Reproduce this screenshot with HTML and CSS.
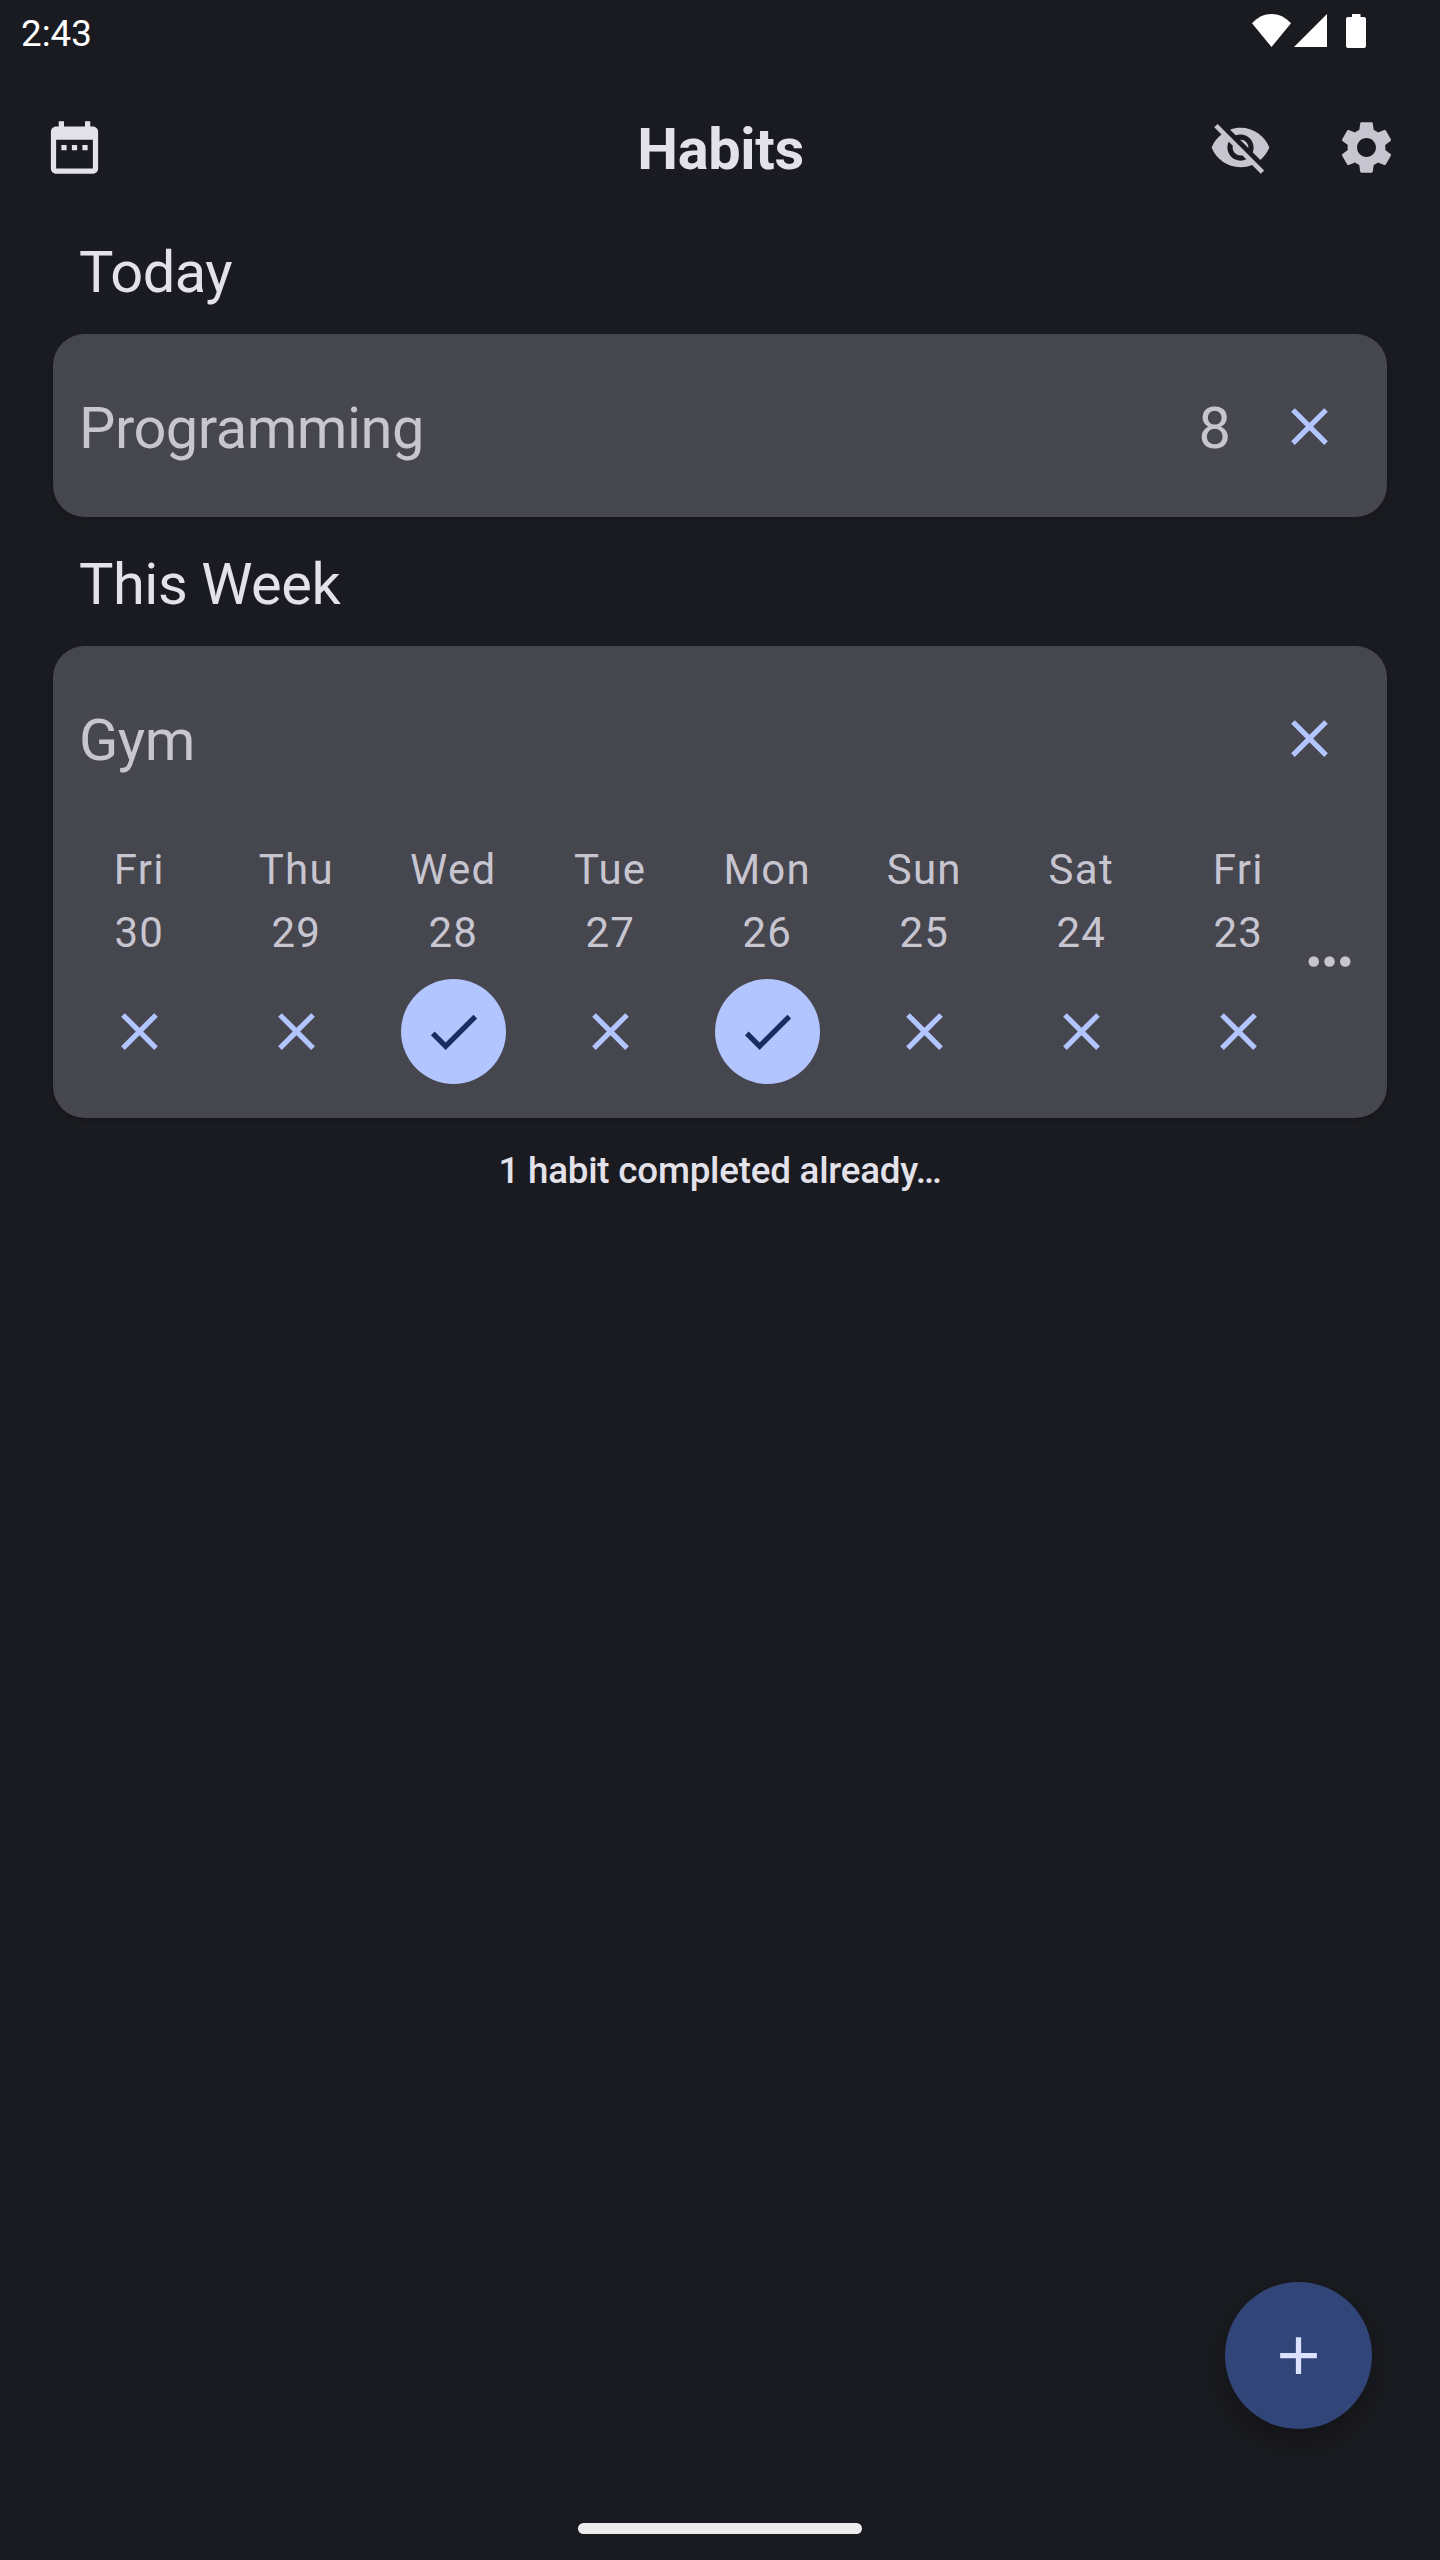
FILE: index.html
```html
<!DOCTYPE html>
<html lang="en">
<head>
<meta charset="utf-8">
<title>Habits</title>
<link rel="stylesheet" href="styles.css">
</head>
<body>
<svg class="sprite" aria-hidden="true">
  <symbol id="close" viewBox="0 0 24 24"><path d="M19 6.41 17.59 5 12 10.59 6.41 5 5 6.41 10.59 12 5 17.59 6.41 19 12 13.41 17.59 19 19 17.59 13.41 12z"/></symbol>
  <symbol id="check" viewBox="0 0 24 24"><path d="M9 16.17 4.83 12l-1.42 1.41L9 19 21 7l-1.41-1.41z"/></symbol>
</svg>
<div class="screen">
  <div class="status">
    <span class="clock">2:43</span>
    <svg class="wifi" viewBox="0 0 39 33"><path d="M19.5 33 0 9.3C5.500 3.200 12.500 0 19.500 0S33.500 3.200 39 9.300z"/></svg>
    <svg class="signal" viewBox="0 0 33 33"><path d="M0 33 33 0v33z"/></svg>
    <svg class="battery" viewBox="0 0 20 34"><path d="M6 0h8.500v3H18a2 2 0 0 1 2 2v27a2 2 0 0 1-2 2H2a2 2 0 0 1-2-2V5a2 2 0 0 1 2-2h4z"/></svg>
  </div>

  <header class="topbar">
    <svg class="icon calendar" viewBox="0 0 24 24"><path d="M9 11H7v2h2v-2zm4 0h-2v2h2v-2zm4 0h-2v2h2v-2zm2-7h-1V2h-2v2H8V2H6v2H5c-1.110 0-1.990.9-1.990 2L3 20c0 1.100.89 2 2 2h14c1.100 0 2-.9 2-2V6c0-1.100-.9-2-2-2zm0 16H5V9h14v11z"/></svg>
    <h1 class="title">Habits</h1>
    <div class="actions">
      <svg class="icon" viewBox="0 0 24 24"><path d="M12 7c2.760 0 5 2.240 5 5 0 .65-.13 1.260-.36 1.830l2.920 2.920c1.510-1.260 2.700-2.890 3.430-4.750-1.730-4.390-6-7.500-11-7.500-1.400 0-2.740.25-3.980.7l2.160 2.160C10.740 7.130 11.350 7 12 7zM2 4.270l2.280 2.280.46.46C3.080 8.300 1.780 10.020 1 12c1.730 4.390 6 7.500 11 7.500 1.550 0 3.030-.3 4.380-.84l.42.42L19.730 22 21 20.730 3.270 3 2 4.270zM7.530 9.800l1.550 1.550c-.05.21-.08.43-.08.65 0 1.660 1.340 3 3 3 .22 0 .44-.03.65-.08l1.550 1.550c-.67.33-1.410.53-2.200.53-2.760 0-5-2.240-5-5 0-.79.2-1.530.53-2.200zm4.310-.78 3.150 3.150.02-.16c0-1.660-1.340-3-3-3l-.17.01z"/></svg>
      <svg class="icon" viewBox="0 0 24 24"><path d="M19.140 12.940c.04-.3.06-.61.06-.94 0-.32-.02-.64-.07-.94l2.030-1.580c.18-.14.23-.41.12-.61l-1.920-3.320c-.12-.22-.37-.29-.59-.22l-2.390.96c-.5-.38-1.030-.7-1.620-.94l-.36-2.540c-.04-.24-.24-.41-.48-.41h-3.840c-.24 0-.43.17-.47.41l-.36 2.540c-.59.24-1.130.57-1.620.94l-2.390-.96c-.22-.08-.47 0-.59.22L2.740 8.870c-.12.21-.08.47.12.61l2.030 1.580c-.05.3-.09.63-.09.94s.02.64.07.94l-2.030 1.580c-.18.14-.23.41-.12.61l1.920 3.320c.12.22.37.29.59.22l2.390-.96c.5.38 1.030.7 1.620.94l.36 2.540c.05.24.24.41.48.41h3.840c.24 0 .44-.17.47-.41l.36-2.540c.59-.24 1.130-.56 1.620-.94l2.390.96c.22.08.47 0 .59-.22l1.920-3.320c.12-.22.07-.47-.12-.61l-2.010-1.580zM12 15.600c-1.980 0-3.600-1.620-3.600-3.600s1.620-3.600 3.600-3.600 3.600 1.620 3.600 3.600-1.620 3.600-3.600 3.600z"/></svg>
    </div>
  </header>

  <main class="content">
    <h2 class="section">Today</h2>
    <section class="card">
      <div class="habit">
        <span class="name">Programming</span>
        <span class="streak">8</span>
        <svg class="icon mark"><use href="#close"/></svg>
      </div>
    </section>

    <h2 class="section">This Week</h2>
    <section class="card">
      <div class="habit">
        <span class="name">Gym</span>
        <svg class="icon mark"><use href="#close"/></svg>
      </div>
      <div class="history">
        <div class="day"><span>Fri</span><span>30</span><i class="toggle"><svg class="icon"><use href="#close"/></svg></i></div>
        <div class="day"><span>Thu</span><span>29</span><i class="toggle"><svg class="icon"><use href="#close"/></svg></i></div>
        <div class="day"><span>Wed</span><span>28</span><i class="toggle done"><svg class="icon"><use href="#check"/></svg></i></div>
        <div class="day"><span>Tue</span><span>27</span><i class="toggle"><svg class="icon"><use href="#close"/></svg></i></div>
        <div class="day"><span>Mon</span><span>26</span><i class="toggle done"><svg class="icon"><use href="#check"/></svg></i></div>
        <div class="day"><span>Sun</span><span>25</span><i class="toggle"><svg class="icon"><use href="#close"/></svg></i></div>
        <div class="day"><span>Sat</span><span>24</span><i class="toggle"><svg class="icon"><use href="#close"/></svg></i></div>
        <div class="day"><span>Fri</span><span>23</span><i class="toggle"><svg class="icon"><use href="#close"/></svg></i></div>
        <svg class="icon more" viewBox="0 0 24 24"><circle cx="6" cy="12" r="2"/><circle cx="12" cy="12" r="2"/><circle cx="18" cy="12" r="2"/></svg>
      </div>
    </section>
    <p class="summary">1 habit completed already…</p>
  </main>

  <div class="fab"><svg class="icon" viewBox="0 0 24 24"><path d="M19 13h-6v6h-2v-6H5v-2h6V5h2v6h6z"/></svg></div>
  <div class="home-bar"></div>
</div>
</body>
</html>
```
FILE: styles.css
```css
* { box-sizing: border-box; margin: 0; padding: 0; }

body {
  background: #1a1b20;
  color: #e3e1e9;
  font-family: Roboto, "Liberation Sans", sans-serif;
}

svg { display: block; fill: currentColor; }
.sprite { position: absolute; width: 0; height: 0; }
.icon { width: 63px; height: 63px; flex: none; }

.screen {
  position: relative;
  display: flex;
  flex-direction: column;
  width: 1440px;
  height: 2560px;
  overflow: hidden;
}

.status {
  display: flex;
  align-items: flex-start;
  height: 63px;
  padding: 14px 74px 0 21px;
  color: #fff;
}
.clock { flex: 1; margin-top: -2px; font-size: 36.75px; line-height: 43px; }
.wifi { width: 39px; height: 33px; }
.signal { width: 33px; height: 33px; margin-left: 3px; }
.battery { width: 20px; height: 34px; margin-left: 19px; }

.topbar {
  display: grid;
  grid-template-columns: 1fr auto 1fr;
  align-items: center;
  height: 142px;
  padding: 27px 42px 0 43px;
}
.title {
  padding-top: 4px;
  font-size: 57.75px;
  font-weight: 700;
  line-height: 73.5px;
  letter-spacing: -.35px;
}
.actions { display: flex; justify-content: flex-end; gap: 63px; color: #c6c5d0; }

.content { padding: 0 53px; }
.section {
  height: 129px;
  padding: 31px 26px 0;
  font-size: 57.75px;
  font-weight: 400;
  line-height: 73px;
  letter-spacing: -.45px;
}
.card {
  border-radius: 31.5px;
  background: #46464f;
  color: #c6c5d0;
  box-shadow: 0 2px 4px rgba(0, 0, 0, .2);
}
.habit {
  display: flex;
  align-items: center;
  height: 183px;
  padding: 2px 46px 0 26px;
  font-size: 57.75px;
  line-height: 73px;
}
.name { flex: 1; padding-top: 4px; letter-spacing: -.5px; }
.streak { padding-top: 4px; margin-right: 47px; }
.mark, .toggle { color: #b3c5ff; }

.history { display: flex; align-items: center; padding: 9px 26px 34px 34px; }
.day {
  display: flex;
  flex-direction: column;
  align-items: center;
  width: 105px;
  margin-right: 52px;
  font-size: 42px;
  line-height: 63px;
  letter-spacing: 1.25px;
}
.day span { padding-right: .5px; }
.toggle {
  display: grid;
  place-items: center;
  width: 105px;
  height: 105px;
  margin-top: 15px;
  border-radius: 50%;
}
.done { background: #b3c5ff; color: #182e60; }
.more { margin-left: -45px; }

.summary {
  margin-top: 27px;
  font-size: 36.75px;
  font-weight: 500;
  line-height: 52px;
  letter-spacing: -.22px;
  text-align: center;
}

.fab {
  position: absolute;
  right: 68px;
  bottom: 131px;
  display: grid;
  place-items: center;
  width: 147px;
  height: 147px;
  border-radius: 50%;
  background: #314578;
  color: #dbe1ff;
  box-shadow: 0 12px 28px rgba(0, 0, 0, .28);
}
.home-bar {
  width: 284px;
  height: 11px;
  margin: auto auto 26px;
  border-radius: 6px;
  background: #ececec;
}
```
